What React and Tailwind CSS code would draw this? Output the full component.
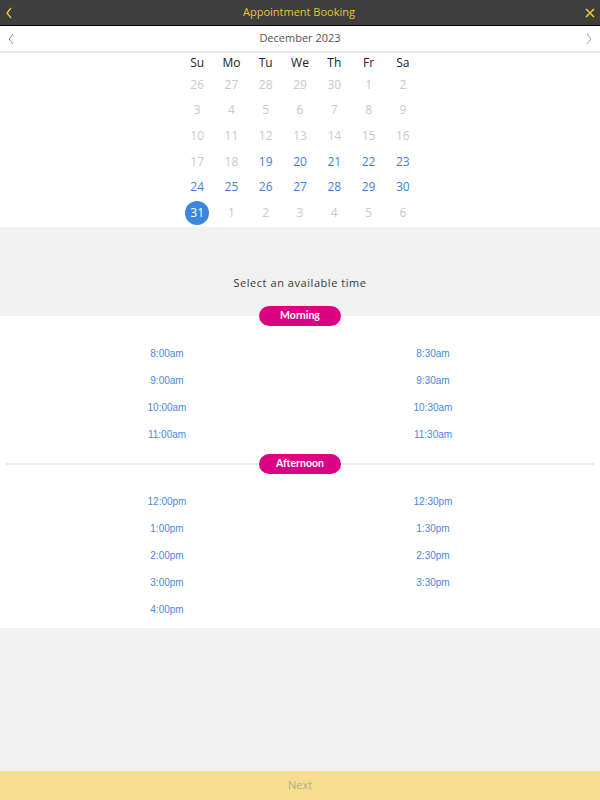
import React from 'react';

const days = ['Su', 'Mo', 'Tu', 'We', 'Th', 'Fr', 'Sa'];

// [label, state] where state: 'off' grey, 'on' available, 'sel' selected
const weeks = [
  [['26', 'off'], ['27', 'off'], ['28', 'off'], ['29', 'off'], ['30', 'off'], ['1', 'off'], ['2', 'off']],
  [['3', 'off'], ['4', 'off'], ['5', 'off'], ['6', 'off'], ['7', 'off'], ['8', 'off'], ['9', 'off']],
  [['10', 'off'], ['11', 'off'], ['12', 'off'], ['13', 'off'], ['14', 'off'], ['15', 'off'], ['16', 'off']],
  [['17', 'off'], ['18', 'off'], ['19', 'on'], ['20', 'on'], ['21', 'on'], ['22', 'on'], ['23', 'on']],
  [['24', 'on'], ['25', 'on'], ['26', 'on'], ['27', 'on'], ['28', 'on'], ['29', 'on'], ['30', 'on']],
  [['31', 'sel'], ['1', 'off'], ['2', 'off'], ['3', 'off'], ['4', 'off'], ['5', 'off'], ['6', 'off']],
];

const morning = ['8:00am', '8:30am', '9:00am', '9:30am', '10:00am', '10:30am', '11:00am', '11:30am'];
const afternoon = ['12:00pm', '12:30pm', '1:00pm', '1:30pm', '2:00pm', '2:30pm', '3:00pm', '3:30pm', '4:00pm'];

const Pill = ({ children }) => (
  <div className="w-[82px] h-[20px] rounded-full bg-[#da0283] text-white text-[10.5px] font-bold font-['Lato',sans-serif] flex items-center justify-center">
    {children}
  </div>
);

const Slots = ({ times }) => (
  <div className="grid grid-cols-2 px-[34px] font-['Liberation_Sans',Arial,sans-serif]">
    {times.map((t) => (
      <div key={t} className="h-[27px] flex items-center justify-center text-[10px] text-[#4a88e0]">
        {t}
      </div>
    ))}
  </div>
);

const App = () => {
  return (
    <div className="h-screen flex flex-col bg-[#f1f1f1] font-['Open_Sans',sans-serif]">
      {/* Top bar */}
      <div className="h-[26px] bg-[#3e3e3e] border-b border-black flex items-center justify-between px-[5px]">
        <svg width="8" height="12" viewBox="0 0 8 12" fill="none" stroke="#f2c12e" strokeWidth="1.4">
          <path d="M6 1 L2 6 L6 11" />
        </svg>
        <span className="text-[11px] text-[#f2c12e]">Appointment Booking</span>
        <svg width="10" height="10" viewBox="0 0 10 10" fill="none" stroke="#f2c12e" strokeWidth="1.6">
          <path d="M1 1 L9 9 M9 1 L1 9" />
        </svg>
      </div>

      {/* Month switcher */}
      <div className="h-[27px] bg-white border-b-2 border-[#ececec] flex items-center justify-between px-[7px]">
        <svg width="8" height="12" viewBox="0 0 8 12" fill="none" stroke="#7f8a90" strokeWidth="1">
          <path d="M6 1 L2 6 L6 11" />
        </svg>
        <span className="text-[11px] text-[#555]">December 2023</span>
        <svg width="8" height="12" viewBox="0 0 8 12" fill="none" stroke="#9aa2a6" strokeWidth="1">
          <path d="M2 1 L6 6 L2 11" />
        </svg>
      </div>

      {/* Calendar */}
      <div className="bg-white flex justify-center pb-[1px]">
        <div className="w-[240px]">
          <div className="grid grid-cols-7 h-[19px]">
            {days.map((d) => (
              <div key={d} className="flex items-center justify-center text-[12px] text-[#222]">
                {d}
              </div>
            ))}
          </div>
          {weeks.map((w, i) => (
            <div key={i} className="grid grid-cols-7 h-[25.6px]">
              {w.map(([n, s], j) => (
                <div key={j} className="flex items-center justify-center">
                  {s === 'sel' ? (
                    <span className="w-[24px] h-[24px] rounded-full bg-[#3a86e0] text-white text-[12px] flex items-center justify-center">
                      {n}
                    </span>
                  ) : (
                    <span className={s === 'on' ? 'text-[12px] text-[#3f7fd9]' : 'text-[12px] text-[#c9c9c9]'}>
                      {n}
                    </span>
                  )}
                </div>
              ))}
            </div>
          ))}
        </div>
      </div>

      {/* Prompt */}
      <div className="h-[89px] flex items-end justify-center pb-[24px]">
        <span className="text-[11px] tracking-[0.05em] text-[#3a3a3a]">Select an available time</span>
      </div>

      {/* Time slots */}
      <div className="bg-white pb-[5px]">
        <div className="flex justify-center -mt-[10px]">
          <Pill>Morning</Pill>
        </div>
        <div className="pt-[14px]">
          <Slots times={morning} />
        </div>
        <div className="flex items-center px-[6px] mt-[6px]">
          <div className="flex-1 h-[2px] bg-[#e8ebeb]" />
          <Pill>Afternoon</Pill>
          <div className="flex-1 h-[2px] bg-[#e8ebeb]" />
        </div>
        <div className="pt-[14px]">
          <Slots times={afternoon} />
        </div>
      </div>

      <div className="flex-1" />

      {/* Footer */}
      <div className="h-[29px] bg-[#f7dd8f] flex items-center justify-center">
        <span className="text-[11px] text-[#b5ad8c]">Next</span>
      </div>
    </div>
  );
};

export default App;
